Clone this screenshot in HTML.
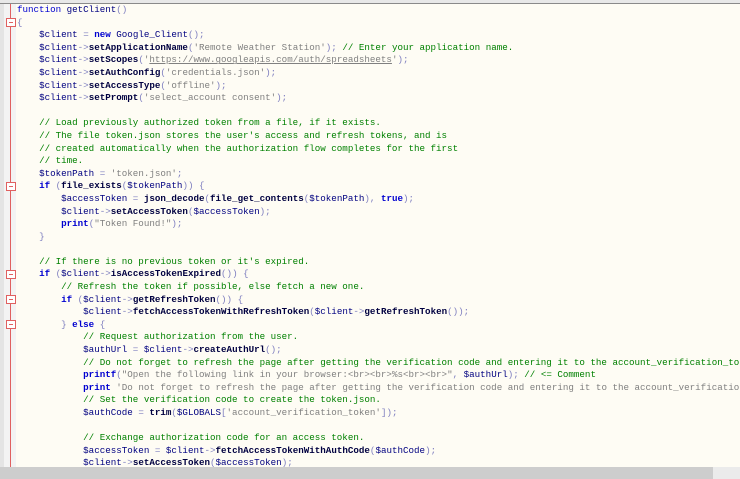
<!DOCTYPE html>
<html><head><meta charset="utf-8"><style>
html,body{margin:0;padding:0;width:740px;height:479px;overflow:hidden;background:#fefcf4;}
#top{position:absolute;left:0;top:0;width:740px;height:3px;background:#e8e8e8;border-bottom:1px solid #8a8a8a;}
#g1{position:absolute;left:0;top:4px;width:4px;height:463px;background:#e4e4e4;}
#g2{position:absolute;left:4px;top:4px;width:12px;height:463px;background:#f3f3f3;}
#red{position:absolute;left:10px;top:4px;width:1px;height:463px;background:#e06060;}
.box{position:absolute;left:6px;width:8px;height:7px;border:1px solid #e06060;background:#fff;}
.box:after{content:"";position:absolute;left:2px;top:3px;width:4px;height:1px;background:#e06060;}
#code{position:absolute;left:17px;top:4px;width:723px;height:463px;overflow:hidden;font-family:"Liberation Mono",monospace;font-size:9.2px;line-height:12.6px;white-space:pre;color:#000080;}
.k{color:#0000d0;font-weight:bold}.kf{color:#0000d0}
.m{color:#000040;font-weight:bold}
.p{color:#8080c0}
.s{color:#808080}
.c{color:#008000}
.v{color:#000080}
.u{color:#808080;text-decoration:underline}
#sb{position:absolute;left:0;top:467px;width:713px;height:12px;background:#cdcdcd;}
#sb2{position:absolute;left:713px;top:467px;width:27px;height:12px;background:#ebebeb;}
</style></head><body>
<div id="top"></div><div id="g1"></div><div id="g2"></div><div id="red"></div>
<div class="box" style="top:18px"></div>
<div class="box" style="top:182px"></div>
<div class="box" style="top:270px"></div>
<div class="box" style="top:295px"></div>
<div class="box" style="top:320px"></div>
<div id="code"><span class="kf">function</span> getClient<span class="p">()</span>
<span class="p">{</span>
    <span class="v">$client</span> <span class="p">=</span> <span class="k">new</span> Google_Client<span class="p">();</span>
    <span class="v">$client</span><span class="p">-&gt;</span><span class="m">setApplicationName</span><span class="p">(</span><span class="s">'Remote Weather Station'</span><span class="p">);</span> <span class="c">// Enter your application name.</span>
    <span class="v">$client</span><span class="p">-&gt;</span><span class="m">setScopes</span><span class="p">(</span><span class="s">'<span class="u">https://www.googleapis.com/auth/spreadsheets</span>'</span><span class="p">);</span>
    <span class="v">$client</span><span class="p">-&gt;</span><span class="m">setAuthConfig</span><span class="p">(</span><span class="s">'credentials.json'</span><span class="p">);</span>
    <span class="v">$client</span><span class="p">-&gt;</span><span class="m">setAccessType</span><span class="p">(</span><span class="s">'offline'</span><span class="p">);</span>
    <span class="v">$client</span><span class="p">-&gt;</span><span class="m">setPrompt</span><span class="p">(</span><span class="s">'select_account consent'</span><span class="p">);</span>

    <span class="c">// Load previously authorized token from a file, if it exists.</span>
    <span class="c">// The file token.json stores the user's access and refresh tokens, and is</span>
    <span class="c">// created automatically when the authorization flow completes for the first</span>
    <span class="c">// time.</span>
    <span class="v">$tokenPath</span> <span class="p">=</span> <span class="s">'token.json'</span><span class="p">;</span>
    <span class="k">if</span> <span class="p">(</span><span class="m">file_exists</span><span class="p">(</span><span class="v">$tokenPath</span><span class="p">))</span> <span class="p">{</span>
        <span class="v">$accessToken</span> <span class="p">=</span> <span class="m">json_decode</span><span class="p">(</span><span class="m">file_get_contents</span><span class="p">(</span><span class="v">$tokenPath</span><span class="p">),</span> <span class="k">true</span><span class="p">);</span>
        <span class="v">$client</span><span class="p">-&gt;</span><span class="m">setAccessToken</span><span class="p">(</span><span class="v">$accessToken</span><span class="p">);</span>
        <span class="k">print</span><span class="p">(</span><span class="s">"Token Found!"</span><span class="p">);</span>
    <span class="p">}</span>

    <span class="c">// If there is no previous token or it's expired.</span>
    <span class="k">if</span> <span class="p">(</span><span class="v">$client</span><span class="p">-&gt;</span><span class="m">isAccessTokenExpired</span><span class="p">())</span> <span class="p">{</span>
        <span class="c">// Refresh the token if possible, else fetch a new one.</span>
        <span class="k">if</span> <span class="p">(</span><span class="v">$client</span><span class="p">-&gt;</span><span class="m">getRefreshToken</span><span class="p">())</span> <span class="p">{</span>
            <span class="v">$client</span><span class="p">-&gt;</span><span class="m">fetchAccessTokenWithRefreshToken</span><span class="p">(</span><span class="v">$client</span><span class="p">-&gt;</span><span class="m">getRefreshToken</span><span class="p">());</span>
        <span class="p">}</span> <span class="k">else</span> <span class="p">{</span>
            <span class="c">// Request authorization from the user.</span>
            <span class="v">$authUrl</span> <span class="p">=</span> <span class="v">$client</span><span class="p">-&gt;</span><span class="m">createAuthUrl</span><span class="p">();</span>
            <span class="c">// Do not forget to refresh the page after getting the verification code and entering it to the account_verification_token</span>
            <span class="k">printf</span><span class="p">(</span><span class="s">"Open the following link in your browser:&lt;br&gt;&lt;br&gt;%s&lt;br&gt;&lt;br&gt;"</span><span class="p">,</span> <span class="v">$authUrl</span><span class="p">);</span> <span class="c">// &lt;= Comment</span>
            <span class="k">print</span> <span class="s">'Do not forget to refresh the page after getting the verification code and entering it to the account_verification_token'</span>
            <span class="c">// Set the verification code to create the token.json.</span>
            <span class="v">$authCode</span> <span class="p">=</span> <span class="m">trim</span><span class="p">(</span><span class="v">$GLOBALS</span><span class="p">[</span><span class="s">'account_verification_token'</span><span class="p">]);</span>

            <span class="c">// Exchange authorization code for an access token.</span>
            <span class="v">$accessToken</span> <span class="p">=</span> <span class="v">$client</span><span class="p">-&gt;</span><span class="m">fetchAccessTokenWithAuthCode</span><span class="p">(</span><span class="v">$authCode</span><span class="p">);</span>
            <span class="v">$client</span><span class="p">-&gt;</span><span class="m">setAccessToken</span><span class="p">(</span><span class="v">$accessToken</span><span class="p">);</span>
</div>
<div id="sb"></div><div id="sb2"></div>
</body></html>
